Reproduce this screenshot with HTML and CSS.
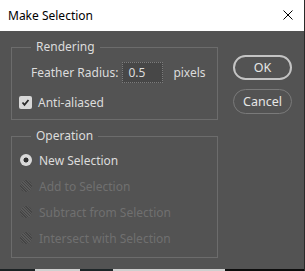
FILE: index.html
```html
<!DOCTYPE html>
<html>
<head>
<meta charset="utf-8">
<link rel="stylesheet" href="styles.css">
</head>
<body>
<div class="window">
  <div class="titlebar">
    <span class="title">Make Selection</span>
    <svg class="close" width="10" height="10" viewBox="0 0 10 10"><path d="M0.5 0.5 L9.5 9.5 M9.5 0.5 L0.5 9.5" stroke="#000" stroke-width="1" fill="none"/></svg>
  </div>
  <div class="content">
    <div class="groups">
      <fieldset class="group rendering">
        <legend>Rendering</legend>
        <div class="feather">
          <span class="label">Feather Radius:</span>
          <span class="input">0.5</span>
          <span class="unit">pixels</span>
        </div>
        <div class="check-row">
          <span class="checkbox"><svg width="13" height="13" viewBox="0 0 13 13"><path d="M3.5 6.5 L5.5 8.8 L9.5 4" stroke="#2a2a2a" stroke-width="1.8" fill="none"/></svg></span>
          <span class="check-label">Anti-aliased</span>
        </div>
      </fieldset>
      <fieldset class="group operation">
        <legend>Operation</legend>
        <div class="radio-row"><span class="radio on"></span><span class="radio-label">New Selection</span></div>
        <div class="radio-row disabled"><span class="radio off"></span><span class="radio-label">Add to Selection</span></div>
        <div class="radio-row disabled"><span class="radio off"></span><span class="radio-label">Subtract from Selection</span></div>
        <div class="radio-row disabled"><span class="radio off"></span><span class="radio-label">Intersect with Selection</span></div>
      </fieldset>
    </div>
    <div class="buttons">
      <div class="btn ok">OK</div>
      <div class="btn cancel">Cancel</div>
    </div>
  </div>
  <div class="strip">
    <span class="s1"></span><span class="s2"></span><span class="s3"></span><span class="s4"></span><span class="s5"></span>
  </div>
</div>
</body>
</html>
```
FILE: styles.css
```css
html, body {
  margin: 0;
  padding: 0;
  background: #535353;
}
body {
  width: 305px;
  height: 271px;
  overflow: hidden;
  font-family: "Noto Sans", "Open Sans", sans-serif;
  font-size: 12px;
}
.window {
  width: 304px;
  height: 271px;
  border-right: 1px solid #2a2a2a;
  display: flex;
  flex-direction: column;
  background: #535353;
}
.titlebar {
  height: 31px;
  background: #ffffff;
  display: flex;
  align-items: center;
  justify-content: space-between;
  padding: 0 11px 0 8px;
  box-sizing: border-box;
  flex: none;
}
.title {
  color: #000;
  font-size: 12px;
  margin-top: -1px;
}
.close {
  display: block;
  margin-top: -1px;
}
.content {
  flex: 1;
  display: flex;
  padding: 8px 0 0 11px;
  gap: 15px;
}
.groups {
  width: 207px;
  display: flex;
  flex-direction: column;
  gap: 8px;
}
.group {
  margin: 0;
  border: 1px solid #6c6c6c;
  padding: 0 7px;
  min-width: 0;
}
.group legend {
  margin-left: 12px;
  padding: 0 5px;
  color: #dcdcdc;
  line-height: 16px;
  font-size: 12px;
}
.rendering {
  padding-top: 7px;
  padding-bottom: 9px;
}
.feather {
  display: flex;
  align-items: center;
  margin-left: 12px;
  height: 21px;
  color: #dcdcdc;
}
.input {
  width: 41px;
  height: 21px;
  box-sizing: border-box;
  margin-left: 4px;
  background: #474747;
  border: 1px dotted #7c7c7c;
  padding-left: 5px;
  line-height: 19px;
}
.unit {
  margin-left: 10px;
}
.check-row {
  display: flex;
  align-items: center;
  height: 16px;
  margin-top: 11px;
}
.checkbox {
  width: 13px;
  height: 13px;
  background: #d8d8d8;
  border-radius: 2px;
  display: block;
}
.checkbox svg { display: block; }
.check-label {
  margin-left: 6px;
  color: #dcdcdc;
}
.operation {
  padding-top: 8px;
  padding-bottom: 11px;
}
.radio-row {
  display: flex;
  align-items: center;
  height: 16px;
  margin-bottom: 10px;
  padding-left: 1px;
}
.radio-row:last-child { margin-bottom: 0; }
.radio {
  width: 12px;
  height: 12px;
  border-radius: 50%;
  box-sizing: border-box;
  flex: none;
}
.radio.on {
  background: radial-gradient(circle, #303030 0 2.2px, #d9d9d9 2.8px);
}
.radio.off {
  background: repeating-linear-gradient(45deg, #454545 0 1px, #5a5a5a 1px 2px);
}
.radio-label {
  margin-left: 7px;
  color: #dcdcdc;
}
.disabled .radio-label {
  color: #707070;
}
.buttons {
  display: flex;
  flex-direction: column;
  gap: 9px;
  padding-top: 16px;
}
.btn {
  width: 59px;
  height: 25px;
  box-sizing: border-box;
  border-radius: 13px;
  display: flex;
  align-items: center;
  justify-content: center;
  color: #e6e6e6;
  font-size: 12.5px;
}
.ok {
  border: 2px solid #c4c4c4;
}
.cancel {
  border: 1px solid #7a7a7a;
}
.strip {
  height: 2px;
  display: flex;
  flex: none;
}
.strip span { display: block; height: 2px; }
.s1 { width: 35px; background: #1c2224; }
.s2 { width: 45px; background: #d0d0d0; }
.s3 { width: 33px; background: #1e2628; }
.s4 { width: 112px; background: #cfcfcf; }
.s5 { flex: 1; background: #0d0d0d; }
```
